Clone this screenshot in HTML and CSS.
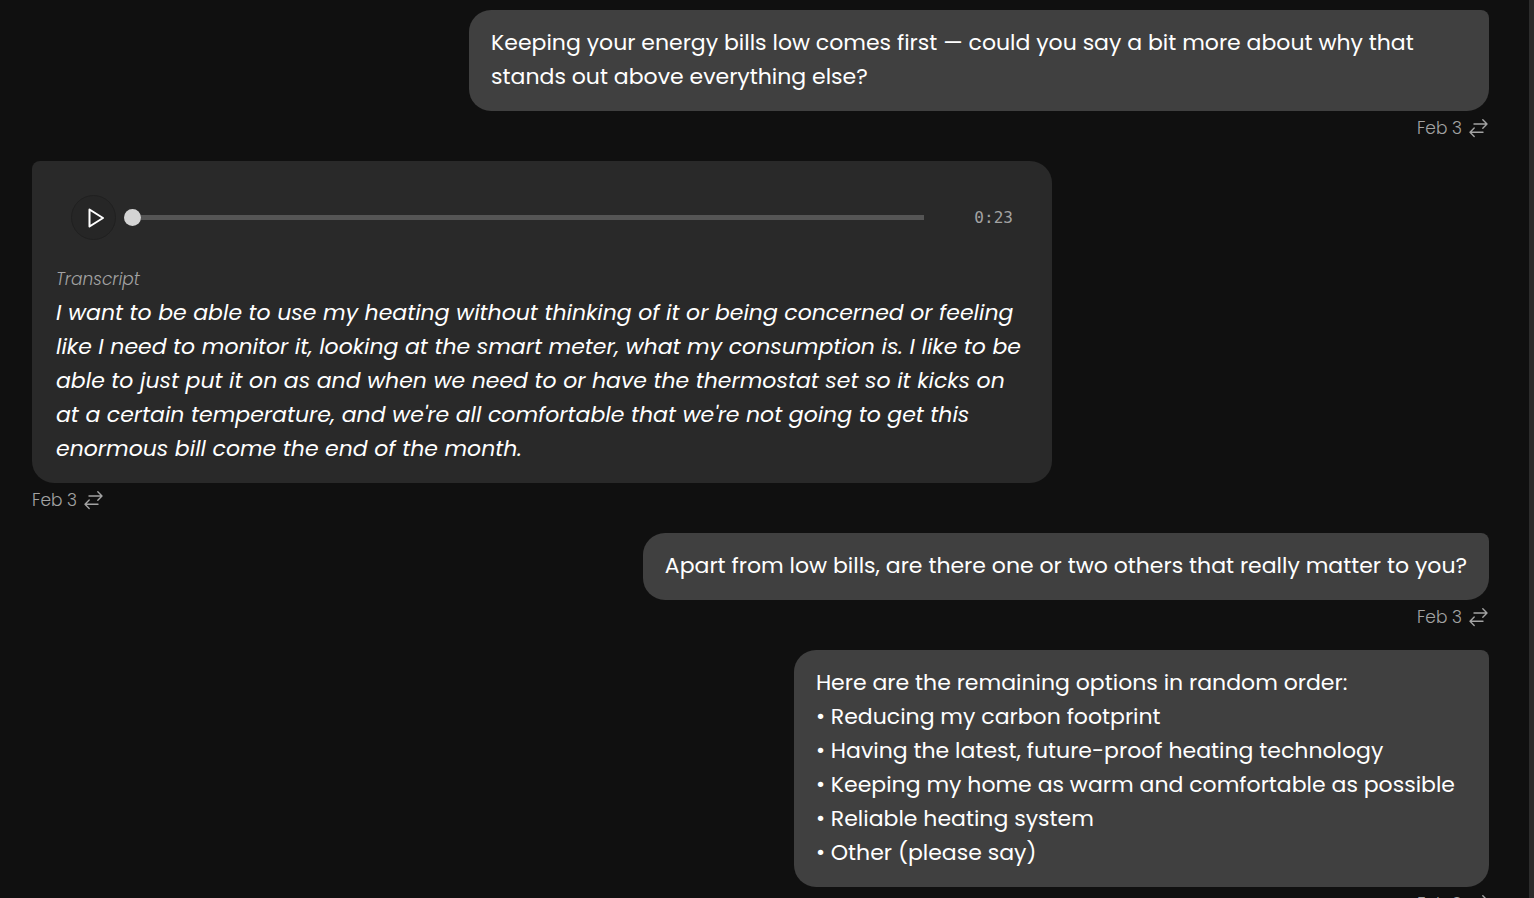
FILE: index.html
```html
<!DOCTYPE html>
<html lang="en">
<head>
    <meta charset="UTF-8">
    <meta name="viewport" content="width=device-width, initial-scale=1.0">
    <title>Conversation</title>
    <link rel="stylesheet" href="styles.css">
</head>
<body>
    <!-- Shared icon -->
    <svg class="sprite" aria-hidden="true">
        <symbol id="swap" viewBox="0 0 20 20">
            <path d="M5 6H17.8M13.8 1.8L18 6L13.8 10.2M14 14.3H1.2M5.2 10.1L1 14.3L5.2 18.5" />
        </symbol>
    </svg>

    <main class="chat">
        <!-- Question -->
        <article class="message sent">
            <div class="bubble">Keeping your energy bills low comes first — could you say a bit more about why that stands out above everything else?</div>
            <div class="meta">
                <time>Feb 3</time>
                <button class="swap" aria-label="Translate"><svg><use href="#swap" /></svg></button>
            </div>
        </article>

        <!-- Voice answer -->
        <article class="message received">
            <div class="bubble">
                <div class="player">
                    <button class="play" aria-label="Play">
                        <svg viewBox="0 0 24 24"><path d="M5.5 3.5L19 12L5.5 20.5Z" /></svg>
                    </button>
                    <input class="seek" type="range" min="0" max="23" value="0" aria-label="Seek">
                    <span class="duration">0:23</span>
                </div>
                <div class="label">Transcript</div>
                <p class="transcript">I want to be able to use my heating without thinking of it or being concerned or feeling like I need to monitor it, looking at the smart meter, what my consumption is. I like to be able to just put it on as and when we need to or have the thermostat set so it kicks on at a certain temperature, and we're all comfortable that we're not going to get this enormous bill come the end of the month.</p>
            </div>
            <div class="meta">
                <time>Feb 3</time>
                <button class="swap" aria-label="Translate"><svg><use href="#swap" /></svg></button>
            </div>
        </article>

        <!-- Follow-up question -->
        <article class="message sent">
            <div class="bubble">Apart from low bills, are there one or two others that really matter to you?</div>
            <div class="meta">
                <time>Feb 3</time>
                <button class="swap" aria-label="Translate"><svg><use href="#swap" /></svg></button>
            </div>
        </article>

        <!-- Options -->
        <article class="message sent">
            <div class="bubble options">Here are the remaining options in random order:
• Reducing my carbon footprint
• Having the latest, future-proof heating technology
• Keeping my home as warm and comfortable as possible
• Reliable heating system
• Other (please say)</div>
            <div class="meta">
                <time>Feb 3</time>
                <button class="swap" aria-label="Translate"><svg><use href="#swap" /></svg></button>
            </div>
        </article>
    </main>
</body>
</html>
```
FILE: styles.css
```css
* {
    box-sizing: border-box;
    margin: 0;
    padding: 0;
}

body {
    height: 100vh;
    overflow: hidden;
    background-color: #101010;
    color: #fff;
    font-family: Poppins, Inter, sans-serif;
    font-size: 22px;
    font-weight: 400;
    line-height: 34px;
}

button {
    border: none;
    background: none;
    color: inherit;
    cursor: pointer;
}

svg {
    fill: none;
    stroke: currentColor;
    stroke-linejoin: round;
    stroke-linecap: round;
}

.sprite {
    position: absolute;
    width: 0;
    height: 0;
}

/* Message column, with the scroll track on its right */
.chat {
    display: flex;
    flex-direction: column;
    gap: 16px;
    min-height: 100vh;
    padding: 10px 40px 0 32px;
    border-right: 5px solid #2c2c2c;
}

.message {
    display: flex;
    flex-direction: column;
    align-items: flex-start;
}

.sent {
    align-items: flex-end;
}

.bubble {
    max-width: 70%;
    padding: 16px 22px 17px;
    border-radius: 22px;
    background-color: #404040;
}

.sent .bubble {
    border-top-right-radius: 8px;
}

.received .bubble {
    width: 70%;
    padding: 28px 24px 17px;
    border-top-left-radius: 8px;
    background-color: #292929;
}

.sent .options {
    padding-right: 34px;
    white-space: pre-wrap;
}

/* Date and translate button under a bubble */
.meta {
    display: flex;
    align-items: center;
    gap: 7px;
    height: 34px;
    color: #a3a3a3;
    font-size: 17px;
    font-weight: 300;
}

.swap {
    width: 20px;
    height: 20px;
}

.swap svg {
    display: block;
    width: 20px;
    height: 20px;
    stroke-width: 1.4;
}

/* Audio player */
.player {
    display: flex;
    align-items: center;
    padding: 6px 15px;
    margin-bottom: 20px;
}

.play {
    display: flex;
    align-items: center;
    justify-content: center;
    width: 45px;
    height: 45px;
    border: 1px solid #202020;
    border-radius: 50%;
    background-color: #262626;
}

.play svg {
    width: 24px;
    height: 24px;
    margin-left: 4px;
    stroke-width: 2;
}

.seek {
    flex: 1;
    height: 17px;
    margin: 0 50px 0 8px;
    appearance: none;
    background: linear-gradient(#555, #555) center / calc(100% - 1px) 5px no-repeat;
    border-radius: 3px;
}

.seek::-webkit-slider-thumb {
    appearance: none;
    width: 17px;
    height: 17px;
    border-radius: 50%;
    background-color: #d4d4d4;
}

.duration {
    color: #a3a3a3;
    font-family: "DejaVu Sans Mono", monospace;
    font-size: 16px;
    font-weight: 400;
}

.label {
    margin-bottom: 3px;
    color: #a3a3a3;
    font-size: 17px;
    font-style: italic;
    font-weight: 300;
    line-height: 27px;
}

.transcript {
    font-style: italic;
}
```
